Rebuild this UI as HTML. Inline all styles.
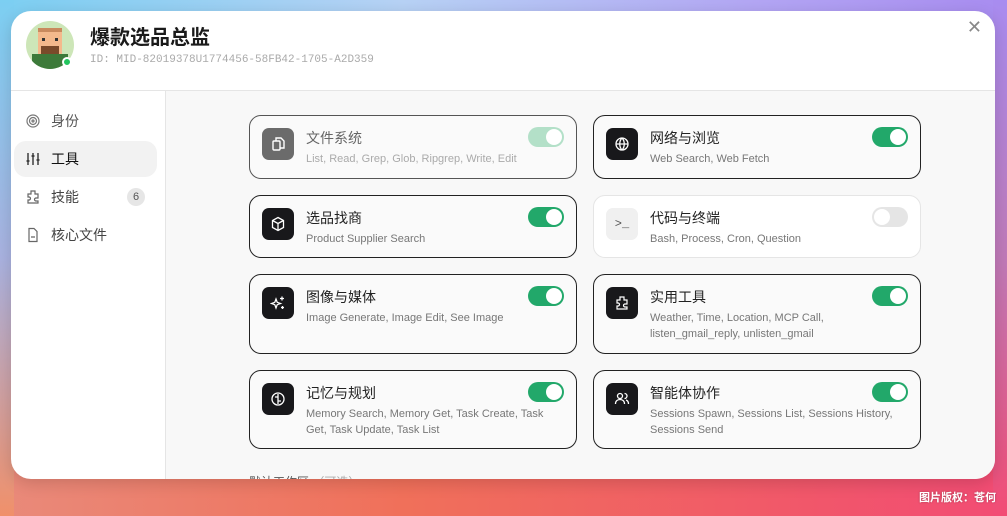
<!DOCTYPE html>
<html><head><meta charset="utf-8"><style>
*{box-sizing:border-box;margin:0;padding:0}
body{width:1007px;height:516px;overflow:hidden;font-family:"Liberation Sans","Noto Sans CJK SC",sans-serif;position:relative;
background:linear-gradient(90deg,#7ccff2 0%,#b7d2f5 40%,#b3a6f4 75%,#a88cf0 100%);}
.bot{position:absolute;left:0;right:0;top:250px;bottom:0;background:linear-gradient(90deg,#e98a7a 0%,#f0705a 40%,#f1576a 80%,#f24c74 100%);}
.midL{position:absolute;left:0;top:0;width:14px;height:516px;background:linear-gradient(180deg,#7ccff2,#a9b2e0 50%,#f0906a);}
.midR{position:absolute;right:0;top:0;width:14px;height:516px;background:linear-gradient(180deg,#a88cf0,#c07ab8 50%,#f24c74);}
.card{position:absolute;left:11px;top:11px;width:984px;height:468px;background:#fff;border-radius:20px;overflow:hidden;box-shadow:0 4px 16px rgba(0,0,0,.15)}
.hdr{height:80px;border-bottom:1px solid #e5e5e5;position:relative}
.av{position:absolute;left:15px;top:10px;width:48px;height:48px;border-radius:50%;background:#cde6b8;overflow:hidden}
.dot{position:absolute;left:51px;top:46px;width:10px;height:10px;border-radius:50%;background:#22c55e;border:2px solid #fff}
.title{position:absolute;left:79px;top:10px;font-size:20px;font-weight:bold;color:#1a1a1a}
.id{position:absolute;left:79px;top:43px;font-family:"Liberation Mono",monospace;font-size:11px;color:#aaa}
.close{position:absolute;right:13px;top:6px;font-size:18px;color:#888;font-weight:300}
.side{position:absolute;left:0;top:80px;width:155px;bottom:0;border-right:1px solid #e5e5e5}
.it{position:absolute;left:3px;width:143px;height:36px;border-radius:12px;font-size:14px;color:#444;padding-left:37px;line-height:36px}
.it svg{position:absolute;left:11px;top:10px}
.it.on{background:#f2f2f2;color:#111}
.badge{position:absolute;right:12px;top:9px;width:18px;height:18px;border-radius:50%;background:#e6e6e6;font-size:11px;line-height:18px;text-align:center;color:#555}
.main{position:absolute;left:155px;top:80px;right:0;bottom:0;background:#f8f8f8}
.t{position:absolute;width:328px;border:1px solid #222;border-radius:12px;background:#fafafa}
.ic{position:absolute;left:12px;top:12px;width:32px;height:32px;border-radius:7px;background:#18181b;display:flex;align-items:center;justify-content:center}
.nm{position:absolute;left:56px;top:12px;font-size:14px;color:#222}
.ds{position:absolute;left:56px;top:35px;font-size:11px;color:#777;line-height:16px;width:260px}
.sw{position:absolute;right:12px;top:11px;width:36px;height:20px;border-radius:10px;background:#22a86a}
.sw::after{content:"";position:absolute;right:2px;top:2px;width:16px;height:16px;border-radius:50%;background:#fff}
.sw.off{background:#e5e5e5}.sw.off::after{left:2px;right:auto}
.sec{position:absolute;left:83px;top:382px;font-size:12px;color:#555}
.cr{position:absolute;right:11px;bottom:11px;font-size:11px;color:#fff;font-weight:bold;text-shadow:0 0 2px rgba(0,0,0,.3)}
</style></head><body>
<div class="bot"></div><div class="midL"></div><div class="midR"></div>
<div class="card">
<div class="hdr">
<div class="av"><svg width="48" height="48" viewBox="0 0 48 48"><rect x="12" y="9" width="24" height="24" fill="#f4b98c"/><rect x="12" y="7" width="24" height="4" fill="#c98a5e"/><rect x="16" y="17" width="3" height="3" fill="#333"/><rect x="29" y="17" width="3" height="3" fill="#333"/><rect x="15" y="25" width="18" height="8" fill="#7a4a2a"/><rect x="6" y="33" width="36" height="15" fill="#3d7a3a"/></svg></div>
<div class="dot"></div>
<div class="title">爆款选品总监</div>
<div class="id">ID: MID-82019378U1774456-58FB42-1705-A2D359</div>
<div class="close">✕</div>
</div>
<div class="side">
<div class="it" style="top:12px;color:#555"><svg width="16" height="16" viewBox="0 0 16 16" fill="none" stroke="#777" stroke-width="1.2"><circle cx="8" cy="8" r="6"/><circle cx="8" cy="8" r="3.5"/><circle cx="8" cy="8" r="1"/></svg>身份</div>
<div class="it on" style="top:50px"><svg width="16" height="16" viewBox="0 0 16 16" fill="none" stroke="#333" stroke-width="1.4"><path d="M3 2v12M8 2v12M13 2v12M1.5 10h3M6.5 5h3M11.5 9h3"/></svg>工具</div>
<div class="it" style="top:88px"><svg width="16" height="16" viewBox="0 0 16 16" fill="none" stroke="#666" stroke-width="1.2"><path d="M6 2h4v3h3v4h-2a1.5 1.5 0 000 3h2v2H3v-3h1a1.5 1.5 0 000-3H3V5h3z"/></svg>技能<span class="badge">6</span></div>
<div class="it" style="top:126px"><svg width="16" height="16" viewBox="0 0 16 16" fill="none" stroke="#666" stroke-width="1.2"><path d="M4 1.5h5l3 3v10H4z M6 10h4"/></svg>核心文件</div>
</div>
<div class="main">
<div class="t" style="left:83px;top:24px;height:64px;border-color:#555"><div class="ic" style="background:#6b6b6b"><svg width="16" height="16" viewBox="0 0 16 16" fill="none" stroke="#fff" stroke-width="1.4"><rect x="3" y="5" width="7" height="9" rx="1"/><path d="M6 5V2h5l3 3v7h-4"/></svg></div><div class="nm" style="color:#666">文件系统</div><div class="ds" style="color:#aaa">List, Read, Grep, Glob, Ripgrep, Write, Edit</div><div class="sw" style="background:#b3e0c8"></div></div>
<div class="t" style="left:427px;top:24px;height:64px"><div class="ic"><svg width="16" height="16" viewBox="0 0 16 16" fill="none" stroke="#fff" stroke-width="1.3"><circle cx="8" cy="8" r="6"/><path d="M2 8h12M8 2c-3 3-3 9 0 12M8 2c3 3 3 9 0 12"/></svg></div><div class="nm">网络与浏览</div><div class="ds">Web Search, Web Fetch</div><div class="sw"></div></div>
<div class="t" style="left:83px;top:104px;height:63px"><div class="ic"><svg width="16" height="16" viewBox="0 0 16 16" fill="none" stroke="#fff" stroke-width="1.3"><path d="M8 1.5l5.5 3v7L8 14.5 2.5 11.5v-7zM2.5 4.5L8 7.5l5.5-3M8 7.5v7"/></svg></div><div class="nm">选品找商</div><div class="ds">Product Supplier Search</div><div class="sw"></div></div>
<div class="t" style="left:427px;top:104px;height:63px;border-color:#e5e5e5;background:#fff"><div class="ic" style="background:#f0f0f0;color:#555;font-size:12px;font-family:'Liberation Mono',monospace">&gt;_</div><div class="nm">代码与终端</div><div class="ds">Bash, Process, Cron, Question</div><div class="sw off"></div></div>
<div class="t" style="left:83px;top:183px;height:80px"><div class="ic"><svg width="16" height="16" viewBox="0 0 16 16" fill="none" stroke="#fff" stroke-width="1.3"><path d="M6 4l1.2 3.3L10.5 8.5 7.2 9.7 6 13 4.8 9.7 1.5 8.5l3.3-1.2zM12 1.5v4M10 3.5h4M12.5 11v3M11 12.5h3"/></svg></div><div class="nm">图像与媒体</div><div class="ds">Image Generate, Image Edit, See Image</div><div class="sw"></div></div>
<div class="t" style="left:427px;top:183px;height:80px"><div class="ic"><svg width="16" height="16" viewBox="0 0 16 16" fill="none" stroke="#fff" stroke-width="1.2"><path d="M6 2h4v3h3v4h-2a1.5 1.5 0 000 3h2v2H3v-3h1a1.5 1.5 0 000-3H3V5h3z"/></svg></div><div class="nm">实用工具</div><div class="ds">Weather, Time, Location, MCP Call, listen_gmail_reply, unlisten_gmail</div><div class="sw"></div></div>
<div class="t" style="left:83px;top:279px;height:79px"><div class="ic"><svg width="16" height="16" viewBox="0 0 16 16" fill="none" stroke="#fff" stroke-width="1.3"><circle cx="8" cy="8" r="6"/><path d="M8 3v10M5 6h3M8 10h3"/></svg></div><div class="nm">记忆与规划</div><div class="ds">Memory Search, Memory Get, Task Create, Task Get, Task Update, Task List</div><div class="sw"></div></div>
<div class="t" style="left:427px;top:279px;height:79px"><div class="ic"><svg width="16" height="16" viewBox="0 0 16 16" fill="none" stroke="#fff" stroke-width="1.3"><circle cx="6" cy="5" r="2.5"/><path d="M1.5 13c0-3 2-4.5 4.5-4.5s4.5 1.5 4.5 4.5M10.5 2.5a2.5 2.5 0 010 5M12 9c1.5.5 2.5 2 2.5 4"/></svg></div><div class="nm">智能体协作</div><div class="ds">Sessions Spawn, Sessions List, Sessions History, Sessions Send</div><div class="sw"></div></div>
<div class="sec">默认工作区 <span style="color:#aaa">（可选）</span></div>
</div>
</div>
<div class="cr">图片版权：苍何</div>
</body></html>
